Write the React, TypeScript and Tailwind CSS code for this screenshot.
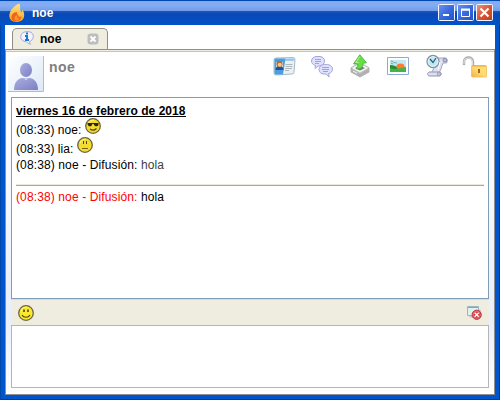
import React from 'react';

type FaceKind = 'cool' | 'flat' | 'smile';

function Face({ kind, className = '' }: { kind: FaceKind; className?: string }) {
  return (
    <svg viewBox="0 0 16 16" className={`h-4 w-4 shrink-0 ${className}`}>
      <circle cx="8" cy="8" r="7.3" fill={kind === 'smile' ? '#fbe92d' : '#f4dc2e'} stroke="#6d6342" strokeWidth="1.3" />
      <path d="M3 6C4 3 7 2 9 2.2" stroke="#fff68a" strokeWidth="1" fill="none" />
      {kind === 'cool' && (
        <>
          <path d="M2.5 5h11v1c0 1.500-.7 2.300-2 2.300S9 7.500 8.700 6H7.300C7 7.500 6.300 8.300 5 8.300S2.900 7.500 2.500 6z" fill="#292715" />
          <path d="M5 11c2 1.500 4.500 1.500 6.500-.5" stroke="#4b421c" strokeWidth="1.2" fill="none" />
        </>
      )}
      {kind === 'flat' && (
        <>
          <path d="M6.500 4v3M9.500 4v3" stroke="#4b421c" strokeWidth="1" />
          <path d="M5 11.500h6" stroke="#6b6028" strokeWidth="1" />
        </>
      )}
      {kind === 'smile' && (
        <>
          <path d="M6 4.500v2.500M10 4.500v2.500" stroke="#4b421c" strokeWidth="1.6" />
          <path d="M4 10c1.500 3 6.500 3 8 0" stroke="#4b421c" strokeWidth="1.2" fill="none" />
        </>
      )}
    </svg>
  );
}

function Flame() {
  return (
    <svg viewBox="0 0 16 20" className="h-5 w-4">
      <defs>
        <linearGradient id="flame" x2="0" y2="1"><stop stopColor="#ffe681" /><stop offset="1" stopColor="#f5a323" /></linearGradient>
      </defs>
      <path d="M10.500.5C5 2.500 1 7 .4 12c-.5 4 2.500 7 6.800 7 5 0 8.200-3 8-7.500-.1-2-.8-3-1.500-4.500l-1.500 2C10 6 12 4 10.500.5z" fill="url(#flame)" />
      <path d="M8 9c-4 0-6 3-5.500 6.500.8 2.300 3 3 5 2.800 3-.2 5.200-2.500 5-5.300l-2 1.500c-.5-2-3-3-2.500-5.500z" fill="#ef6517" />
      <path d="M8 12c-3 1-3.500 5-.5 5.800 2 .1 3-1.300 2.500-3l-1.300.8z" fill="#ff902e" />
    </svg>
  );
}

function WindowButton({ kind }: { kind: 'min' | 'max' | 'close' }) {
  return (
    <svg viewBox="0 0 17 17" className="h-[17px] w-[17px]">
      <defs>
        <linearGradient id="btn-blue" x2="1" y2="1"><stop stopColor="#7192ee" /><stop offset=".5" stopColor="#386bdd" /><stop offset="1" stopColor="#204fc7" /></linearGradient>
        <linearGradient id="btn-red" x2="1" y2="1"><stop stopColor="#e89a80" /><stop offset=".5" stopColor="#d65635" /><stop offset="1" stopColor="#c43c17" /></linearGradient>
      </defs>
      <rect x=".5" y=".5" width="16" height="16" rx="1" fill={kind === 'close' ? 'url(#btn-red)' : 'url(#btn-blue)'} stroke="#f4f6ff" />
      {kind === 'min' && <path d="M5 11h6" stroke="#fff" strokeWidth="2" />}
      {kind === 'max' && <path d="M4.500 5v7.500h8V5M4 6h9" fill="none" stroke="#fff" strokeWidth="1" />}
      {kind === 'max' && <path d="M4 5.500h9" stroke="#fff" strokeWidth="2" />}
      {kind === 'close' && <path d="M4.500 4.500l8 8m0-8l-8 8" stroke="#fff" strokeWidth="2.200" />}
    </svg>
  );
}

function InfoIcon() {
  return (
    <svg viewBox="0 0 14 14" className="h-3.5 w-3.5">
      <path d="M6 .7h3c3 .4 4.500 2.600 4.300 5-.2 2.600-2 4.400-4 4.800.3 1.200.7 2 1.200 2.800-2-.5-3-1.300-4-2.500C3 10.500.7 8.500.7 5.700.7 3 3 .8 6 .7z" fill="#f3f3ff" stroke="#a9a9d1" />
      <path d="M7 1.500v2M5 5h2v4M5 9h4" stroke="#1979d2" strokeWidth="2" fill="none" />
    </svg>
  );
}

function Avatar() {
  return (
    <svg viewBox="0 0 36 36" className="h-9 w-9">
      <defs>
        <linearGradient id="av-bg" x2="1" y2="1"><stop stopColor="#fff" /><stop offset="1" stopColor="#dce9f6" /></linearGradient>
        <linearGradient id="av-fg" x2="1" y2="1"><stop stopColor="#abaee1" /><stop offset="1" stopColor="#7d7fc2" /></linearGradient>
      </defs>
      <path d="M0 0h35v35H0z" fill="url(#av-bg)" />
      <path d="M35.500 0v35.500H0" fill="none" stroke="#b9bbc2" />
      <path d="M6 34c0-7 3-11 8-12h8c5 1 8 5 8 12z" fill="url(#av-fg)" />
      <path d="M13 21c3 2 7 2 10 0l-5 3z" fill="#dce4f5" />
      <ellipse cx="18" cy="14" rx="6" ry="7" fill="url(#av-fg)" />
    </svg>
  );
}

function CardIcon() {
  return (
    <svg viewBox="0 0 24 20" className="h-5 w-6">
      <path d="M1 4q0-2 2-2l17-.500q2 0 2 2l-1 13q0 1.500-2 1.500L3 19q-2 0-2-2z" fill="#edf0f1" stroke="#8baac2" strokeWidth=".8" />
      <path d="M1.500 4Q1.500 2.500 3 2.500h9.500L10 18.500H3q-1.500 0-1.500-2z" fill="#4b9de2" />
      <path d="M12 2.700l8-.2q1 0 1 1v1.300l-9 .3z" fill="#8fc8ee" />
      <path d="M3 6h7v8H3z" fill="#b6e2f7" />
      <path d="M2.500 14c0-3 1.700-4 4-4s4 1 4 4z" fill="#244e9e" />
      <circle cx="6.500" cy="8" r="3" fill="#bc681f" /><circle cx="6.800" cy="8.800" r="2" fill="#ffc784" />
      <path d="M12.500 8.500h7M12.500 10.500h7M12 12.500h7M12 14.500h4" stroke="#a7b0b5" strokeWidth=".9" />
    </svg>
  );
}

function ChatIcon() {
  return (
    <svg viewBox="0 0 24 24" className="h-6 w-6">
      <g fill="#e0e1ff" stroke="#a4a5d8">
        <path d="M7 1.500h3c3 .3 4.500 2.200 4.500 4.700S12 11 9 11H8l-3 2.500.5-3C3 10 1.500 8 1.500 6 1.500 3.300 4 1.500 7 1.500z" />
        <path d="M14.500 9.500h2c3.500 0 6 2 6 4.500 0 2.300-1.500 4-4 4.700l.7 3.300-3.200-3h-2c-3 0-5-2-5-4.500 0-3 2.500-5 5.500-5z" />
      </g>
      <path d="M5 4.500h6M5 6.500h6M5 8.500h4M12 12.500h7M12 14.500h7M13 16.500h5" stroke="#9294b4" strokeWidth=".8" />
    </svg>
  );
}

function SendIcon() {
  return (
    <svg viewBox="0 0 20 24" className="h-6 w-5">
      <path d="M1 14l5-3h8l5 3v4l-9 5-9-5z" fill="#c8c9ca" stroke="#999" strokeWidth=".7" />
      <path d="M1 14l5-3h8l5 3-9 5z" fill="#f3f3f3" stroke="#aaa" strokeWidth=".7" />
      <path d="M5 14l5-2 5 2-5 2.500z" fill="#777" />
      <path d="M1.500 15l8.500 5v2.500L1.500 18zM10 20l8.500-5v3L10 22.500z" fill="#b0b0b0" /><path d="M3 17l4 2.300" stroke="#f5f5f5" />
      <path d="M9.800.8l6.700 8-3.500.4c0 3-1 5.500-5 5.700-1.700 0-2-.5-2-.5 2-1.400 2-3 1.700-4.500L3.500 10c2-3 4-6 6.300-9.200z" fill="#65df45" stroke="#3dab35" strokeWidth=".8" />
      <path d="M9.800 2.500L5.800 8.500l3 .1" fill="none" stroke="#b5f392" />
    </svg>
  );
}

function PhotoIcon() {
  return (
    <svg viewBox="0 0 22 18" className="h-[18px] w-[22px]">
      <path d="M.5.500h21v17H.500z" fill="#fff" stroke="#8eabd2" />
      <path d="M3 3h16v12H3z" fill="#c0e9f1" />
      <path d="M3 8c3 0 6 1 9 3h7v4H3z" fill="#248c31" />
      <ellipse cx="13.500" cy="9.500" rx="4" ry="3" fill="#ff7a35" />
      <path d="M3 11c6 3 11-1 16-1v5H3z" fill="#45b447" />
      <path d="M4 4c2 0 2 1 3 2 1-1 2 0 3 0M4 6l2 1" fill="none" stroke="#6e8999" strokeWidth=".8" />
    </svg>
  );
}

function HistoryIcon() {
  return (
    <svg viewBox="0 0 24 24" className="h-6 w-6">
      <path d="M10 4h9c3 0 4 3 2.500 5H18c-2 5-2 8-5 11l-7-1c3-4 4-7 4-15z" fill="#dedff0" stroke="#a3a5be" />
      <path d="M4 18h10c3 0 3 4 0 4H5c-3 0-3-3-1-4z" fill="#dfe0ee" stroke="#9294ae" />
      <circle cx="14" cy="20" r="1.800" fill="#c2c3df" stroke="#8b8da8" strokeWidth=".6" />
      <circle cx="20" cy="6" r="2" fill="#babbd7" stroke="#7b7d9c" strokeWidth=".8" />
      <circle cx="8" cy="7.500" r="6" fill="#b9e8fb" stroke="#8b9197" strokeWidth="1.300" />
      <circle cx="8" cy="7.500" r="4.800" fill="none" stroke="#e2f6fb" />
      <path d="M5 5l3 3.500L11 4" fill="none" stroke="#36586c" strokeWidth="1.200" /><path d="M15 8l-2 8" stroke="#fff" />
    </svg>
  );
}

function LockIcon() {
  return (
    <svg viewBox="0 0 25 22" className="h-[22px] w-[25px]">
      <defs><linearGradient id="lock" x1="1" x2="0" y2="1"><stop stopColor="#ffe373" /><stop offset=".5" stopColor="#ffda72" /><stop offset="1" stopColor="#f4af3d" /></linearGradient></defs>
      <path d="M2 9V6c0-3 2-4.500 4.500-4.500S11 3 11 6v4" stroke="#aaa" strokeWidth="2.400" fill="none" />
      <path d="M2 8V6c0-3 2-4 4.500-4S10.500 3 10.500 6v3" stroke="#ddd" strokeWidth="1.100" fill="none" />
      <rect x="9.500" y="9.500" width="15" height="11.500" rx="1" fill="url(#lock)" stroke="#f3bd5a" strokeWidth=".8" />
      <path d="M10 10h14" stroke="#efa338" /><path d="M17 13v4" stroke="#9b6b22" strokeWidth="2" />
    </svg>
  );
}

function ClearIcon() {
  return (
    <svg viewBox="0 0 15 14" className="h-3.5 w-[15px]">
      <path d="M2.500 3.500h11v8h-11z" fill="#b7c5c9" /><path d="M.5.500h11v9H.500z" fill="#ddf0f2" stroke="#9bb8bf" /><path d="M1 1.500h10" stroke="#71afc0" />
      <circle cx="9.700" cy="8.800" r="4.600" fill="#d7393f" stroke="#b92e38" strokeWidth=".9" />
      <circle cx="9.700" cy="8.800" r="3.600" fill="none" stroke="#f29595" strokeWidth=".6" /><path d="M7.700 6.800l4 4m0-4l-4 4" stroke="#fff" strokeWidth="1.300" />
    </svg>
  );
}

export default function App() {
  return (
    <main className="flex h-[400px] w-[500px] flex-col overflow-hidden bg-[#0054cc] font-['Liberation_Sans',Arial,sans-serif] text-xs text-black shadow-[inset_1px_0_#0047a9,inset_-1px_0_#003da0,inset_0_-1px_#003da0]">
      <header className="flex h-[25px] shrink-0 items-start justify-between bg-[linear-gradient(#0047ad_0px,#0047ad_1px,#7fa9f2_1px,#86adf3_5px,#6e9ceb_11px,#1c57be_11px,#0b48b5_14px,#0053c9_25px)] pl-[9px] pr-[7px]">
        <div className="flex pt-[3px]"><Flame /><span className="ml-[7px] mt-[2px] font-bold leading-4 text-white [text-shadow:1px_1px_#17418e]">noe</span></div>
        <div className="flex gap-[2px] pt-1"><WindowButton kind="min" /><WindowButton kind="max" /><WindowButton kind="close" /></div>
      </header>
      <div className="mx-[5px] flex h-[370px] flex-col bg-white">
        <div className="flex h-6 shrink-0 pl-[7px] pt-[3px]">
          <div className="flex h-[21px] w-24 rounded-t-[5px] border border-b-0 border-[#8f8e86] bg-[#efede0] pl-[7px] pt-[2px]">
            <InfoIcon /><span className="ml-[6px] leading-4 font-bold">noe</span>
            <svg viewBox="0 0 12 12" className="ml-auto mr-2 mt-[2px] h-3 w-3"><rect x=".5" y=".5" width="11" height="11" rx="3" fill="#bdbdbd" /><path d="M3.500 3.500l5 5m0-5l-5 5" stroke="#fff" strokeWidth="2" /></svg>
          </div>
        </div>
        <section className="flex h-[346px] flex-col border border-[#8e9090] bg-[linear-gradient(#fff_0px,#fff_50px,#e9eefb_270px,#fff_345px)] px-[5px]">
          <div className="-mx-[5px] h-px w-[488px] shrink-0 bg-[#efede0]" />
          <div className="-mx-[5px] flex h-[46px] shrink-0 border-t border-[#c5c4be] bg-white pl-[2px] pt-[4px]">
            <Avatar />
            <span className="ml-[5px] mt-[3px] text-sm font-bold leading-4 tracking-[0.5px] text-[#808080]">noe</span>
            <div className="ml-auto flex pr-[7px]">
              <div className="w-[37px]"><CardIcon /></div>
              <div className="-mt-[1px] w-[40px]"><ChatIcon /></div>
              <div className="-mt-[2px] w-[37px]"><SendIcon /></div>
              <div className="mt-[1px] w-[38px]"><PhotoIcon /></div>
              <div className="-mt-[2px] w-[37px]"><HistoryIcon /></div>
              <LockIcon />
            </div>
          </div>
          <div className="flex h-[202px] w-[478px] shrink-0 flex-col border border-[#7f9db9] bg-white px-1 pt-[5px]">
            <div className="flex h-[17px]"><h1 className="h-[14px] whitespace-nowrap border-b border-black font-bold leading-4 tracking-[0.05px]">viernes 16 de febrero de 2018</h1></div>
            <div className="flex h-[19px] whitespace-pre leading-[19px]"><span className="pt-px tracking-[0.06px]">(08:33) noe: </span><Face kind="cool" className="-mt-[2px]" /></div>
            <div className="flex h-[18px] whitespace-pre leading-[18px]"><span className="pt-px tracking-[0.06px]">(08:33) lia: </span><Face kind="flat" className="-mt-[2px]" /></div>
            <p className="leading-4 tracking-[0.12px]">(08:38) noe - Difusión: <span className="text-[#404040]">hola</span></p>
            <div className="mt-[11px] h-[2px] shrink-0 border-b border-[#aca899] bg-[#ece9d8]" />
            <p className="mt-[3px] leading-4 tracking-[0.12px] text-[#f00]">(08:38) noe - Difusión: <span className="text-black">hola</span></p>
          </div>
          <div className="flex h-[26px] w-[478px] shrink-0 items-center justify-between border-t border-[#dedccc] bg-[#efede0] pl-[7px] pr-[7px]"><Face kind="smile" /><ClearIcon /></div>
          <div className="h-[63px] w-[478px] shrink-0 border border-[#b5b5b5] bg-white" />
        </section>
      </div>
    </main>
  );
}
